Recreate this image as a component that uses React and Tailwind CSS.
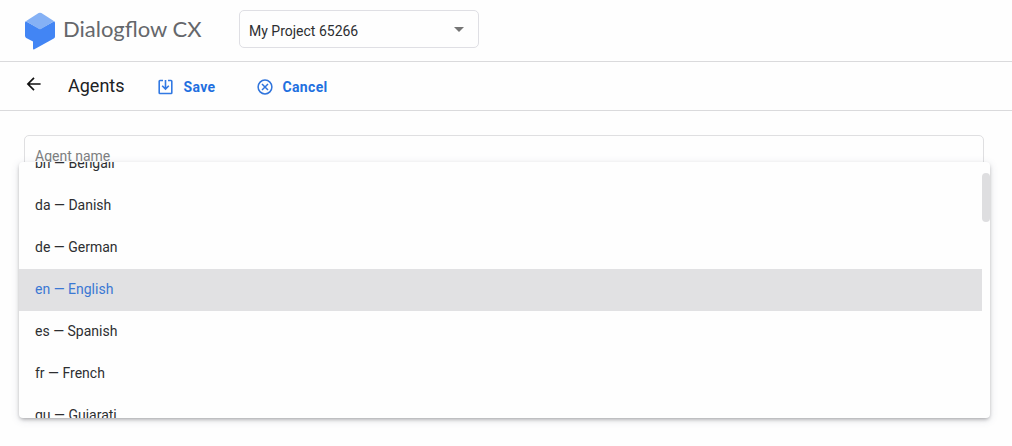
import { useLayoutEffect, useRef, useState } from 'react';

const LANGUAGES = [
  ['bn', 'Bengali'],
  ['da', 'Danish'],
  ['de', 'German'],
  ['en', 'English'],
  ['es', 'Spanish'],
  ['fr', 'French'],
  ['gu', 'Gujarati'],
];

function Logo() {
  return (
    <svg className="h-[38px] w-[30px] shrink-0" viewBox="0 0 30 38" aria-hidden="true">
      <path
        d="M0.8 9.2 L15 17 L29.2 9.2 Q30 10 30 11 V24.4 Q30 25.8 28.8 26.5 L9.4 37.3 Q8 38 8 36.4 V29.6 L1.2 25.9 Q0 25.2 0 23.8 V11 Q0 10 0.8 9.2 Z"
        fill="#4285f4"
      />
      <path
        d="M0.8 9.2 L13.6 1.1 Q15 0.3 16.4 1.1 L29.2 9.2 L16 17 Q15 17.5 14 17 Z"
        fill="#85b1f5"
      />
    </svg>
  );
}

function BackIcon() {
  return (
    <svg className="h-4 w-4" viewBox="0 0 16 16" fill="none" stroke="#111" strokeWidth="1.7" aria-hidden="true">
      <path d="M14.6 8H2.4M8 1.9L1.9 8L8 14.1" />
    </svg>
  );
}

function SaveIcon() {
  return (
    <svg className="h-4 w-4" viewBox="0 0 16 16" fill="none" stroke="#3279e3" strokeWidth="1.6" aria-hidden="true">
      <path d="M5 1.5H1.9Q1.2 1.5 1.2 2.2V13.8Q1.2 14.5 1.9 14.5H13.1Q13.8 14.5 13.8 13.8V2.2Q13.8 1.5 13.1 1.5H10" />
      <path d="M7.5 1V10M4.2 6.8L7.5 10.1L10.8 6.8" />
    </svg>
  );
}

function CancelIcon() {
  return (
    <svg className="h-4 w-4" viewBox="0 0 16 16" fill="none" stroke="#2f74dc" strokeWidth="1.5" aria-hidden="true">
      <circle cx="8" cy="8" r="6.9" />
      <path d="M5 5L11 11M11 5L5 11" />
    </svg>
  );
}

function ProjectSelect() {
  return (
    <div className="relative w-60">
      <select
        aria-label="Project"
        className="block h-[38px] w-full appearance-none rounded-[5px] border border-[#dfdfe4] bg-transparent pt-1 pr-8 pl-[9px] text-sm text-[#2d2e31]"
      >
        <option>My Project 65266</option>
      </select>
      <svg className="pointer-events-none absolute top-[17px] right-[15px] h-[5px] w-[10px]" viewBox="0 0 10 5" aria-hidden="true">
        <path d="M0 0H10L5 5Z" fill="#757575" />
      </svg>
    </div>
  );
}

function LanguageMenu() {
  const list = useRef(null);
  const [selected, setSelected] = useState('en');

  useLayoutEffect(() => {
    list.current.scrollTop = 19;
  }, []);

  return (
    <div className="absolute top-[27px] -right-1.5 -left-[5px] overflow-hidden rounded bg-[#fefefe] shadow-[0_2px_4px_-1px_rgba(0,0,0,0.35),0_2px_10px_rgba(60,64,110,0.12)]">
      <ul
        ref={list}
        role="listbox"
        aria-label="Default language"
        className="h-64 overflow-y-auto pr-2 [scrollbar-width:none]"
      >
        {LANGUAGES.map(([code, name]) => (
          <li key={code} role="option" aria-selected={code === selected}>
            <button
              type="button"
              onClick={() => setSelected(code)}
              className={
                code === selected
                  ? 'block h-[42px] w-full bg-[#e1e1e3] px-4 pb-0.5 text-left text-sm text-[#3b78d4]'
                  : 'block h-[42px] w-full px-4 pb-0.5 text-left text-sm text-[#2d2e31]'
              }
            >
              {code} — {name}
            </button>
          </li>
        ))}
      </ul>
      <div className="absolute top-[11px] right-0 h-[49px] w-2 rounded bg-[#dedee0]" />
    </div>
  );
}

export default function App() {
  return (
    <div className="min-h-screen bg-[#fefefe] font-['Roboto',sans-serif] text-[#2d2e31]">
      <header className="flex h-[62px] items-center border-b border-[#dadadc] pb-1 pl-[25px]">
        <div className="flex w-[214px] shrink-0 items-center gap-2 pt-1">
          <Logo />
          <span className="font-['Lato',sans-serif] text-[22px] leading-7 whitespace-nowrap text-[#65676b] pb-1">
            Dialogflow CX
          </span>
        </div>
        <ProjectSelect />
      </header>

      <nav className="flex h-[49px] items-center border-b border-[#dadadc] pl-[26px]">
        <button type="button" aria-label="Back" className="pb-1">
          <BackIcon />
        </button>
        <h1 className="ml-[26px] text-lg text-[#202124]">Agents</h1>
        <button type="button" className="ml-[33px] flex items-center gap-2.5 pt-0.5 text-sm font-bold tracking-wide text-[#1f70e0]">
          <SaveIcon />
          Save
        </button>
        <button type="button" className="ml-[41px] flex items-center gap-2.5 pt-0.5 text-sm font-bold tracking-wide text-[#1f70e0]">
          <CancelIcon />
          Cancel
        </button>
      </nav>

      <main className="pt-6 pr-7 pl-6">
        <div className="relative">
          <input
            type="text"
            aria-label="Agent name"
            placeholder="Agent name"
            className="block h-[42px] w-full rounded-[5px] border border-[#dfdfe1] bg-transparent px-2.5 text-sm placeholder:text-[#7d7e80]"
          />
          <LanguageMenu />
        </div>
      </main>
    </div>
  );
}
